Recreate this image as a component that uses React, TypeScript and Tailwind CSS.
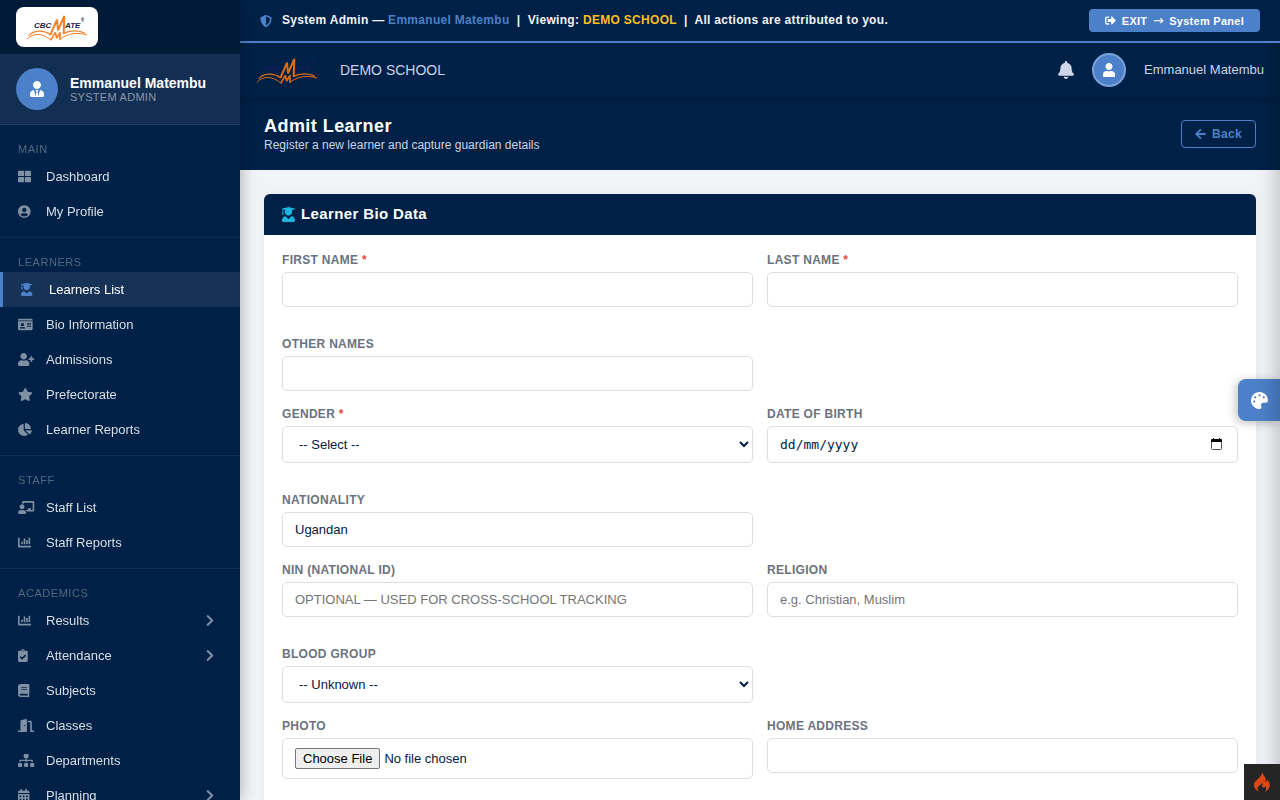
import { useState, type ReactNode } from "react";
import type { IconType } from "react-icons";
import {
  FaArrowLeft,
  FaBell,
  FaBook,
  FaCalendarAlt,
  FaChalkboardTeacher,
  FaChartBar,
  FaChartPie,
  FaChevronRight,
  FaClipboardCheck,
  FaDoorOpen,
  FaIdCard,
  FaPalette,
  FaShieldAlt,
  FaSignOutAlt,
  FaSitemap,
  FaStar,
  FaThLarge,
  FaUser,
  FaUserCircle,
  FaUserGraduate,
  FaUserPlus,
  FaUserTie,
} from "react-icons/fa";

interface NavItem {
  label: string;
  icon: IconType;
  active?: boolean;
  expandable?: boolean;
}

const NAV: { title: string; items: NavItem[] }[] = [
  {
    title: "Main",
    items: [
      { label: "Dashboard", icon: FaThLarge },
      { label: "My Profile", icon: FaUserCircle },
    ],
  },
  {
    title: "Learners",
    items: [
      { label: "Learners List", icon: FaUserGraduate, active: true },
      { label: "Bio Information", icon: FaIdCard },
      { label: "Admissions", icon: FaUserPlus },
      { label: "Prefectorate", icon: FaStar },
      { label: "Learner Reports", icon: FaChartPie },
    ],
  },
  {
    title: "Staff",
    items: [
      { label: "Staff List", icon: FaChalkboardTeacher },
      { label: "Staff Reports", icon: FaChartBar },
    ],
  },
  {
    title: "Academics",
    items: [
      { label: "Results", icon: FaChartBar, expandable: true },
      { label: "Attendance", icon: FaClipboardCheck, expandable: true },
      { label: "Subjects", icon: FaBook },
      { label: "Classes", icon: FaDoorOpen },
      { label: "Departments", icon: FaSitemap },
      { label: "Planning", icon: FaCalendarAlt, expandable: true },
    ],
  },
];

const CONTROL =
  "block w-full rounded-[5px] border border-[#dcdde0] bg-white px-3 text-[13px] text-[#002147] focus:outline-none focus:border-[#4c80c8]";

function Logo({ className, swoosh }: { className: string; swoosh: string }) {
  return (
    <svg viewBox="0 0 186 84" className={className} role="img" aria-label="CBC Mate">
      <g fill="#1b1b5c" fontFamily="Liberation Sans, Arial, sans-serif" fontStyle="italic" fontWeight="700">
        <text x="24" y="46" fontSize="24">CBC</text>
        <text x="117" y="46" fontSize="24">ATE</text>
        <text x="164" y="28" fontSize="14">®</text>
      </g>
      <g fill="none" stroke={swoosh} strokeLinejoin="bevel">
        <path d="M73 66 L93 20 L96 52 L115 9 L113 63" strokeWidth="6" />
        <path d="M74 82 L88 58 L92 75 L102 58 L102 80" strokeWidth="5" />
        <path d="M8 68 C24 51 52 50 74 65" strokeWidth="4" />
        <path d="M3 79 C22 58 50 60 74 81" strokeWidth="3" />
        <path d="M113 61 C136 51 162 52 176 61" strokeWidth="4" />
        <path d="M102 79 C124 61 156 57 183 66" strokeWidth="3" />
      </g>
    </svg>
  );
}

function FlameIcon() {
  return (
    <svg viewBox="0 0 48 60" className="h-5 w-4" fill="currentColor" aria-hidden="true">
      <path d="M24 0C27 8 34 14 35 22C36 27 34 29 36 30C39 29 40 26 39 22C45 28 48 36 47 43C46 51 40 56 32 59C38 53 38 46 33 41C34 47 29 49 26 46C22 42 28 38 24 32C23 38 12 41 11 48C10 53 13 56 16 59C6 56 0 48 0 40C0 30 8 25 14 19C20 13 24 8 24 0Z" />
    </svg>
  );
}

function NavLink({ item }: { item: NavItem }) {
  const Icon = item.icon;
  return (
    <a
      href="#"
      className={`flex h-[35px] items-center pl-[18px] pr-[26px] text-[13px] ${
        item.active ? "border-l-[3px] border-[#4c80c8] bg-[#163257] text-white" : "text-[#d9dee4] hover:bg-white/5"
      }`}
    >
      <span className={`flex w-7 shrink-0 ${item.active ? "text-[#4c80c8]" : "text-[#8090a3]"}`}>
        <Icon preserveAspectRatio="xMinYMid" className="h-[13px] w-[17px]" />
      </span>
      {item.label}
      {item.expandable && <FaChevronRight className="ml-auto h-[13px] w-2 text-[#8090a3]" />}
    </a>
  );
}

function Sidebar() {
  return (
    <aside className="relative z-30 flex h-full w-60 shrink-0 flex-col bg-[#002147] shadow-[2px_0_14px_rgba(0,0,0,0.25)]">
      <div className="flex h-[54px] shrink-0 items-center bg-[#001a38] px-4">
        <div className="flex h-10 items-center rounded-lg bg-white px-2.5">
          <Logo className="h-7 w-[62px]" swoosh="#f97f26" />
        </div>
      </div>
      <div className="flex shrink-0 items-center gap-3 border-b border-[#1f3b5e] bg-[#122e52] px-4 py-3.5">
        <div className="flex size-[42px] items-center justify-center rounded-full bg-[#4c80c8] text-white">
          <FaUserTie size={16} />
        </div>
        <div>
          <p className="text-[14px] leading-4 font-bold text-white">Emmanuel Matembu</p>
          <p className="text-[11px] leading-3 tracking-wide text-[#8997a9]">SYSTEM ADMIN</p>
        </div>
      </div>
      <nav className="flex-1 overflow-y-auto [scrollbar-width:none]">
        {NAV.map((section) => (
          <section key={section.title} className="border-b border-[#0f2d51] pb-2">
            <h2 className="px-[18px] pt-4 pb-0.5 text-[11px] leading-4 tracking-wider text-[#52687f] uppercase">
              {section.title}
            </h2>
            {section.items.map((item) => (
              <NavLink key={item.label} item={item} />
            ))}
          </section>
        ))}
      </nav>
    </aside>
  );
}

function Field({ id, label, required, children }: { id: string; label: string; required?: boolean; children: ReactNode }) {
  return (
    <div>
      <label htmlFor={id} className="mb-1 block text-[12px] leading-[15px] font-bold tracking-wide text-[#6b7280] uppercase">
        {label} {required && <span className="text-[#e74c3c]">*</span>}
      </label>
      {children}
    </div>
  );
}

// Shows the day-first hint until focused, then becomes the native picker
function DateInput({ id }: { id: string }) {
  const [picking, setPicking] = useState(false);
  const [value, setValue] = useState("");
  const native = picking || value !== "";

  return (
    <div className="relative">
      <input
        id={id}
        type={native ? "date" : "text"}
        placeholder="dd/mm/yyyy"
        value={value}
        onChange={(e) => setValue(e.target.value)}
        onFocus={() => setPicking(true)}
        onBlur={() => setPicking(false)}
        className={`${CONTROL} h-[37px] font-['DejaVu_Sans_Mono',monospace] placeholder:text-[#002147]`}
      />
      {!native && (
        <svg viewBox="0 0 11 12" className="pointer-events-none absolute top-3 right-4 h-3 w-[11px]" aria-hidden="true">
          <rect x="0.5" y="1.5" width="10" height="10" rx="1" fill="none" stroke="#555" />
          <path d="M1 1h1V0h1v1h5V0h1v1h1a1 1 0 0 1 1 1v2H0V2a1 1 0 0 1 1-1z" />
        </svg>
      )}
    </div>
  );
}

function BioForm() {
  return (
    <form className="flex flex-col gap-4 p-[18px] pb-12">
      <div className="grid grid-cols-2 items-start gap-x-3.5 gap-y-[30px]">
        <Field id="first-name" label="First Name" required>
          <input id="first-name" type="text" className={`${CONTROL} h-[35px]`} />
        </Field>
        <Field id="last-name" label="Last Name" required>
          <input id="last-name" type="text" className={`${CONTROL} h-[35px]`} />
        </Field>
        <Field id="other-names" label="Other Names">
          <input id="other-names" type="text" className={`${CONTROL} h-[35px]`} />
        </Field>
      </div>
      <div className="grid grid-cols-2 items-start gap-x-3.5 gap-y-[30px]">
        <Field id="gender" label="Gender" required>
          <select id="gender" className={`${CONTROL} h-[37px]`}>
            <option>-- Select --</option>
            <option>Male</option>
            <option>Female</option>
          </select>
        </Field>
        <Field id="dob" label="Date of Birth">
          <DateInput id="dob" />
        </Field>
        <Field id="nationality" label="Nationality">
          <input id="nationality" type="text" defaultValue="Ugandan" className={`${CONTROL} h-[35px]`} />
        </Field>
      </div>
      <div className="grid grid-cols-2 items-start gap-x-3.5 gap-y-[30px]">
        <Field id="nin" label="NIN (National ID)">
          <input
            id="nin"
            type="text"
            placeholder="OPTIONAL — USED FOR CROSS-SCHOOL TRACKING"
            className={`${CONTROL} h-[35px] placeholder:text-[#757575]`}
          />
        </Field>
        <Field id="religion" label="Religion">
          <input
            id="religion"
            type="text"
            placeholder="e.g. Christian, Muslim"
            className={`${CONTROL} h-[35px] placeholder:text-[#757575]`}
          />
        </Field>
        <Field id="blood-group" label="Blood Group">
          <select id="blood-group" className={`${CONTROL} h-[37px]`}>
            <option>-- Unknown --</option>
            <option>A+</option>
            <option>B+</option>
            <option>AB+</option>
            <option>O+</option>
          </select>
        </Field>
      </div>
      <div className="grid grid-cols-2 items-start gap-x-3.5 gap-y-[30px]">
        <Field id="photo" label="Photo">
          <input
            id="photo"
            type="file"
            className={`${CONTROL} h-[41px] py-[9px] file:mr-1 file:h-[21px] file:rounded-[2px] file:border file:border-solid file:border-[#767676] file:bg-[#efefef] file:px-[7px] file:text-black`}
          />
        </Field>
        <Field id="address" label="Home Address">
          <input id="address" type="text" className={`${CONTROL} h-[35px]`} />
        </Field>
      </div>
    </form>
  );
}

export default function App() {
  return (
    <div className="flex h-screen overflow-hidden bg-[#f1f3f7] font-['Liberation_Sans',Arial,sans-serif] text-[#002147]">
      <Sidebar />

      <div className="flex min-w-0 flex-1 flex-col">
        <div className="relative z-20 flex shrink-0 items-center justify-between border-b-2 border-[#4c80c8] bg-[#002147] px-5 py-[9px]">
          <p className="flex items-center text-[12px] leading-[23px] font-bold tracking-wide text-[#f1f3f7]">
            <FaShieldAlt size={12} className="mr-2.5 text-[#4c80c8]" />
            <span className="whitespace-pre">
              System Admin — <span className="text-[#4c80c8]">Emmanuel Matembu</span>
              {"  |  "}Viewing: <span className="text-[#fbbf24]">DEMO SCHOOL</span>
              {"  |  "}All actions are attributed to you.
            </span>
          </p>
          <button className="flex h-[23px] items-center gap-1.5 rounded-[4px] bg-[#4c80c8] px-4 text-[11px] font-bold tracking-wide text-white">
            <FaSignOutAlt size={11} />
            <span className="leading-[23px]">
              EXIT <span className="mx-0.5 font-['DejaVu_Sans',sans-serif] text-[13px] font-normal">→</span> System Panel
            </span>
          </button>
        </div>

        <header className="relative z-10 flex h-[54px] shrink-0 items-center bg-[#002147] px-4 shadow-[0_2px_6px_rgba(0,0,0,0.25)]">
          <Logo className="h-7 w-[62px]" swoosh="#e06c14" />
          <span className="ml-[22px] text-[14px] text-[#ccd3e6]">DEMO SCHOOL</span>
          <button aria-label="Notifications" className="ml-auto text-[#d0d6ea]">
            <FaBell className="h-[18px] w-4" />
          </button>
          <div className="ml-[18px] flex size-[34px] items-center justify-center rounded-full border-2 border-[#7ba1d9] bg-[#4c80c8] text-white">
            <FaUser size={14} />
          </div>
          <span className="ml-[18px] text-[13px] text-[#ccd3e6]">Emmanuel Matembu</span>
        </header>

        <main className="flex-1 overflow-y-auto [scrollbar-width:none]">
          <div className="flex h-[73px] items-center justify-between bg-[#002147] px-6">
            <div>
              <h1 className="text-[18px] leading-[22px] font-bold tracking-wide text-white">Admit Learner</h1>
              <p className="text-[12px] leading-4 text-[#ccd3e6]">Register a new learner and capture guardian details</p>
            </div>
            <a
              href="#"
              className="flex h-7 items-center gap-1.5 rounded-[4px] border border-[#4c80c8] px-[13px] text-[12px] font-bold tracking-wide text-[#4c80c8]"
            >
              <FaArrowLeft className="h-3 w-[11px]" />
              Back
            </a>
          </div>

          <div className="p-6">
            <div className="overflow-hidden rounded-md bg-white shadow-[0_2px_10px_rgba(0,0,0,0.06)]">
              <h2 className="flex h-[41px] items-center gap-1.5 bg-[#002147] px-[18px] text-[15px] font-bold tracking-wide text-white">
                <FaUserGraduate className="h-[15px] w-[13px] text-[#1cb5e0]" />
                Learner Bio Data
              </h2>
              <BioForm />
            </div>
          </div>
        </main>
      </div>

      <button
        aria-label="Theme colours"
        className="fixed top-[379px] right-0 z-10 flex size-[42px] items-center justify-center rounded-l-lg bg-[#4c80c8] text-white shadow-[-2px_2px_10px_rgba(0,0,0,0.25)]"
      >
        <FaPalette size={17} />
      </button>
      {/* closed theme drawer, only its shadow reaches into the page */}
      <div className="fixed inset-y-0 left-full z-10 w-72 bg-white shadow-[-2px_0_20px_rgba(0,0,0,0.25)]" />
      <a
        href="#"
        aria-label="Debug toolbar"
        className="fixed right-0 bottom-0 z-40 flex size-9 items-center justify-center bg-[#252525] text-[#dd4814]"
      >
        <FlameIcon />
      </a>
    </div>
  );
}
